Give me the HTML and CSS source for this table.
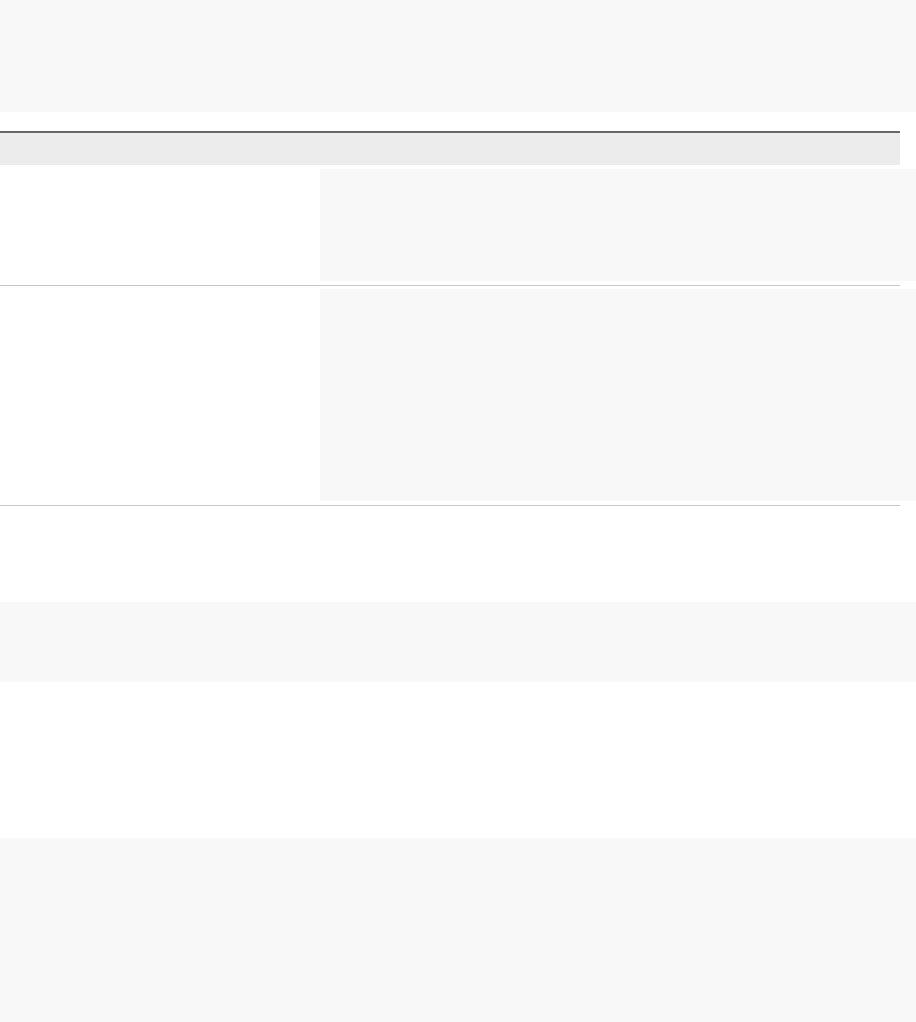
FILE: index.html
```html
<!DOCTYPE html>
<html lang="en">
<head>
<meta charset="utf-8">
<title>Page</title>
<link rel="stylesheet" href="styles.css">
</head>
<body>
  <header class="hero"></header>
  <section class="table">
    <div class="table-head"></div>
    <div class="row row-first">
      <div class="cell-label"></div>
      <div class="cell-value cell-short"></div>
    </div>
    <div class="row row-second">
      <div class="cell-label"></div>
      <div class="cell-value cell-tall"></div>
    </div>
  </section>
  <section class="band band-small"></section>
  <section class="band band-large"></section>
</body>
</html>
```

FILE: styles.css
```css
html, body {
  margin: 0;
  padding: 0;
  background: #ffffff;
  font-family: "Liberation Sans", Arial, sans-serif;
}

body {
  width: 916px;
  overflow: hidden;
}

.hero {
  height: 112px;
  background: #f8f8f8;
}

.table {
  width: 900px;
  margin-top: 19px;
  border-top: 2px solid #676767;
}

.table-head {
  height: 32px;
  background: #ececec;
}

.row {
  display: flex;
  border-bottom: 1px solid #c6c6c6;
}

.row-first {
  padding: 4px 0 4px 0;
}

.row-second {
  padding: 3px 0 4px 0;
}

.cell-label {
  width: 320px;
  flex: 0 0 320px;
}

.cell-value {
  flex: 0 0 596px;
  width: 596px;
  background: #f8f8f8;
}

.cell-short {
  height: 112px;
}

.cell-tall {
  height: 212px;
}

.band {
  background: #f8f8f8;
}

.band-small {
  margin-top: 96px;
  height: 80px;
}

.band-large {
  margin-top: 156px;
  height: 200px;
}
```
